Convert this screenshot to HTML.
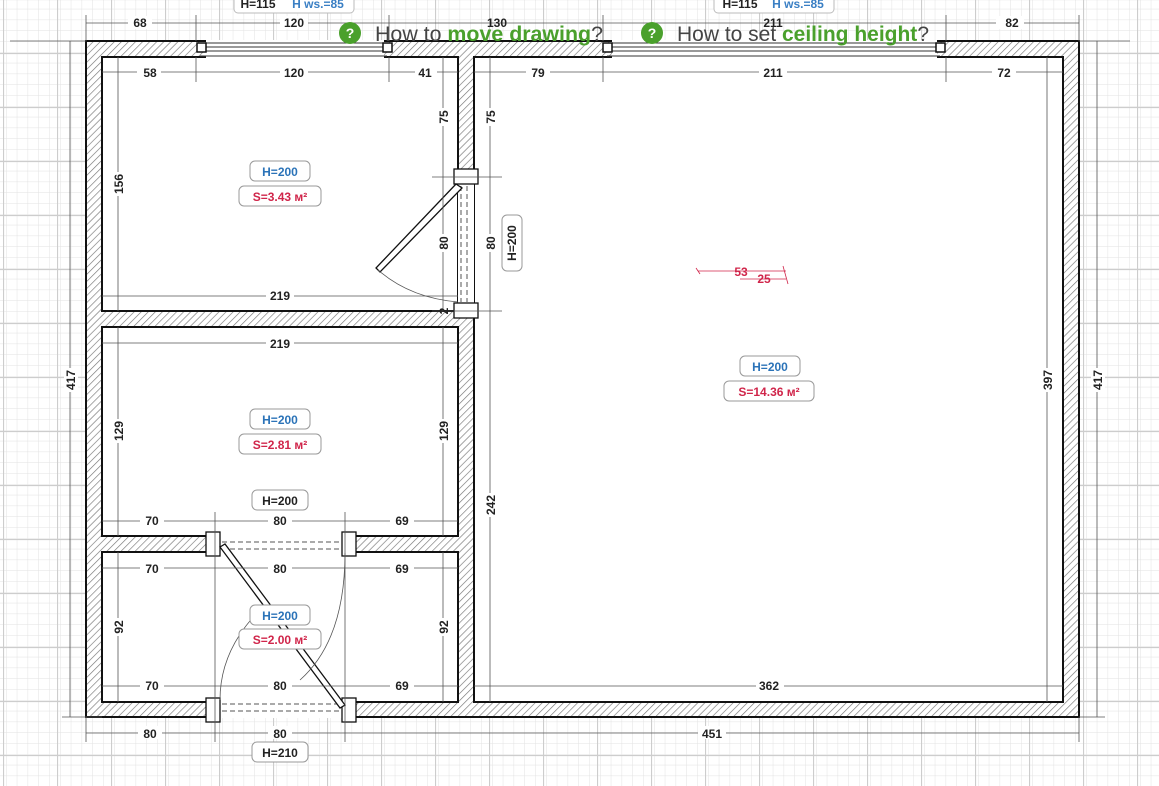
<!DOCTYPE html>
<html><head><meta charset="utf-8"><style>
html,body{margin:0;padding:0;background:#fff;overflow:hidden}
svg{display:block}
text{font-family:"Liberation Sans",Arial,sans-serif;font-weight:bold;font-size:12px;fill:#222}
.dim{stroke:#555;stroke-width:0.8}
.lb{fill:#fff}
</style></head><body>
<svg width="1159" height="786" viewBox="0 0 1159 786" xmlns="http://www.w3.org/2000/svg">
<defs>
<pattern id="minor" x="3" y="-1" width="10.8" height="10.8" patternUnits="userSpaceOnUse">
<path d="M0 0H10.8M0 0V10.8" stroke="#e2e2e2" stroke-width="1" fill="none"/>
</pattern>
<pattern id="major" x="3" y="-1" width="54" height="54" patternUnits="userSpaceOnUse">
<rect width="54" height="54" fill="url(#minor)"/>
<path d="M0 0.5H54M0.5 0V54" stroke="#cdcdcd" stroke-width="1.2" fill="none"/>
</pattern>
<pattern id="hatch" width="5" height="5" patternUnits="userSpaceOnUse" patternTransform="rotate(45)">
<rect width="5" height="5" fill="#fff"/>
<line x1="0" y1="0" x2="0" y2="5" stroke="#777" stroke-width="1.3"/>
</pattern>
</defs>
<rect width="1159" height="786" fill="#fff"/>
<rect width="1159" height="786" fill="url(#major)"/>

<rect x="86" y="41" width="993" height="676" fill="url(#hatch)" stroke="#111" stroke-width="2"/>
<g fill="#fff" stroke="#111" stroke-width="2">
<rect x="102" y="57" width="356" height="254"/>
<rect x="102" y="327" width="356" height="209"/>
<rect x="102" y="552" width="356" height="150"/>
<rect x="474" y="57" width="589" height="645"/>
</g>
<g fill="#fff" stroke="none">
<rect x="458" y="184" width="16" height="126"/>
<rect x="220" y="535" width="122" height="18"/>
<rect x="220" y="701" width="122" height="17"/>
<rect x="206" y="40" width="178" height="18"/>
<rect x="612" y="40" width="325" height="18"/>
</g>
<g stroke="#333" stroke-width="1" fill="none">
<line x1="200" y1="43" x2="387" y2="43"/><line x1="200" y1="47" x2="387" y2="47"/><line x1="200" y1="51" x2="387" y2="51"/><line x1="200" y1="56" x2="387" y2="56"/>
<line x1="607" y1="43" x2="940" y2="43"/><line x1="607" y1="47" x2="940" y2="47"/><line x1="607" y1="51" x2="940" y2="51"/><line x1="607" y1="56" x2="940" y2="56"/>
</g>
<g fill="#fff" stroke="#111" stroke-width="1.5">
<rect x="197" y="43" width="9" height="9"/><rect x="383" y="43" width="9" height="9"/>
<rect x="603" y="43" width="9" height="9"/><rect x="936" y="43" width="9" height="9"/>
</g>
<g fill="#fff" stroke="#111" stroke-width="1.3">
<rect x="454" y="169" width="24" height="15"/><rect x="454" y="303" width="24" height="15"/>
<rect x="206" y="532" width="14" height="24"/><rect x="342" y="532" width="14" height="24"/>
<rect x="206" y="698" width="14" height="24"/><rect x="342" y="698" width="14" height="24"/>
</g>
<g stroke="#555" stroke-width="1" stroke-dasharray="5,3" fill="none">
<line x1="461" y1="186" x2="461" y2="302"/><line x1="467" y1="186" x2="467" y2="302"/>
<line x1="222" y1="542" x2="340" y2="542"/><line x1="222" y1="549" x2="340" y2="549"/>
<line x1="222" y1="704" x2="340" y2="704"/><line x1="222" y1="711" x2="340" y2="711"/>
</g>
<g fill="#fff" stroke="#111" stroke-width="1.3">
<polygon points="456,184 462,188 380,272 376,268"/>
<polygon points="220,547 225,544 345,705 340,708"/>
</g>
<g stroke="#555" stroke-width="0.8" fill="none">
<path d="M378,270 Q410,298 458,302"/>
<path d="M345,553 Q345,640 300,680"/>
<path d="M220,700 Q220,650 260,610"/>
</g>
<g class="dim" fill="none">
<line x1="86" y1="23" x2="1079" y2="23"/>
<line x1="86" y1="15" x2="86" y2="41"/><line x1="196" y1="15" x2="196" y2="41"/><line x1="389" y1="15" x2="389" y2="41"/><line x1="603" y1="15" x2="603" y2="41"/><line x1="946" y1="15" x2="946" y2="41"/><line x1="1079" y1="15" x2="1079" y2="41"/>
<line x1="10" y1="41" x2="86" y2="41"/><line x1="1079" y1="41" x2="1130" y2="41"/>
<line x1="102" y1="72" x2="458" y2="72"/><line x1="474" y1="72" x2="1063" y2="72"/>
<line x1="196" y1="57" x2="196" y2="82"/><line x1="389" y1="57" x2="389" y2="82"/><line x1="603" y1="57" x2="603" y2="82"/><line x1="946" y1="57" x2="946" y2="82"/>
<line x1="70" y1="41" x2="70" y2="717"/><line x1="1097" y1="41" x2="1097" y2="717"/>
<line x1="62" y1="717" x2="102" y2="717"/><line x1="1079" y1="717" x2="1105" y2="717"/>
<line x1="118" y1="57" x2="118" y2="311"/>
<line x1="443" y1="57" x2="443" y2="311"/><line x1="490" y1="57" x2="490" y2="702"/>
<line x1="432" y1="177" x2="502" y2="177"/><line x1="432" y1="311" x2="502" y2="311"/>
<line x1="1047" y1="57" x2="1047" y2="702"/>
<line x1="102" y1="296" x2="458" y2="296"/><line x1="102" y1="343" x2="458" y2="343"/>
<line x1="118" y1="327" x2="118" y2="536"/><line x1="443" y1="327" x2="443" y2="536"/>
<line x1="102" y1="521" x2="458" y2="521"/><line x1="102" y1="568" x2="458" y2="568"/>
<line x1="118" y1="552" x2="118" y2="702"/><line x1="443" y1="552" x2="443" y2="702"/>
<line x1="102" y1="686" x2="458" y2="686"/><line x1="474" y1="686" x2="1063" y2="686"/>
<line x1="86" y1="733" x2="1079" y2="733"/>
<line x1="86" y1="717" x2="86" y2="742"/><line x1="215" y1="512" x2="215" y2="742"/><line x1="345" y1="512" x2="345" y2="742"/><line x1="1079" y1="717" x2="1079" y2="742"/>
</g>
<g text-anchor="middle">
<g class="lb"><rect x="128" y="16" width="24" height="13"/><rect x="280" y="16" width="28" height="13"/><rect x="996" y="16" width="28" height="13"/>
<rect x="137" y="66" width="24" height="13"/><rect x="280" y="66" width="28" height="13"/><rect x="415" y="66" width="22" height="13"/><rect x="526" y="66" width="24" height="13"/><rect x="759" y="66" width="28" height="13"/><rect x="992" y="66" width="24" height="13"/>
<rect x="266" y="289" width="28" height="13"/><rect x="266" y="336" width="28" height="13"/>
<rect x="140" y="514" width="24" height="13"/><rect x="268" y="514" width="24" height="13"/><rect x="390" y="514" width="24" height="13"/>
<rect x="140" y="561" width="24" height="13"/><rect x="268" y="561" width="24" height="13"/><rect x="390" y="561" width="24" height="13"/>
<rect x="140" y="679" width="24" height="13"/><rect x="268" y="679" width="24" height="13"/><rect x="390" y="679" width="24" height="13"/><rect x="756" y="679" width="28" height="13"/>
<rect x="138" y="726" width="24" height="13"/><rect x="268" y="726" width="24" height="13"/><rect x="698" y="726" width="28" height="13"/>
</g>
<text x="140" y="27">68</text><text x="294" y="27">120</text><text x="497" y="27">130</text><text x="773" y="27">211</text><text x="1012" y="27">82</text>
<text x="150" y="77">58</text><text x="294" y="77">120</text><text x="425" y="77">41</text><text x="538" y="77">79</text><text x="773" y="77">211</text><text x="1004" y="77">72</text>
<text x="280" y="300">219</text><text x="280" y="348">219</text>
<text x="152" y="525">70</text><text x="280" y="525">80</text><text x="402" y="525">69</text>
<text x="152" y="573">70</text><text x="280" y="573">80</text><text x="402" y="573">69</text>
<text x="152" y="690">70</text><text x="280" y="690">80</text><text x="402" y="690">69</text><text x="769" y="690">362</text>
<text x="150" y="738">80</text><text x="280" y="738">80</text><text x="712" y="738">451</text>
</g>
<g text-anchor="middle">
<g transform="translate(75,380) rotate(-90)"><rect x="-12" y="-11" width="24" height="14" class="lb"/><text>417</text></g>
<g transform="translate(1102,380) rotate(-90)"><rect x="-12" y="-11" width="24" height="14" class="lb"/><text>417</text></g>
<g transform="translate(123,184) rotate(-90)"><rect x="-12" y="-11" width="24" height="14" class="lb"/><text>156</text></g>
<g transform="translate(448,117) rotate(-90)"><rect x="-9" y="-11" width="18" height="14" class="lb"/><text>75</text></g>
<g transform="translate(495,117) rotate(-90)"><rect x="-9" y="-11" width="18" height="14" class="lb"/><text>75</text></g>
<g transform="translate(448,243) rotate(-90)"><rect x="-9" y="-11" width="18" height="14" class="lb"/><text>80</text></g>
<g transform="translate(495,243) rotate(-90)"><rect x="-9" y="-11" width="18" height="14" class="lb"/><text>80</text></g>
<g transform="translate(448,311) rotate(-90)"><text>2</text></g>
<g transform="translate(495,505) rotate(-90)"><rect x="-12" y="-11" width="24" height="14" class="lb"/><text>242</text></g>
<g transform="translate(1052,380) rotate(-90)"><rect x="-12" y="-11" width="24" height="14" class="lb"/><text>397</text></g>
<g transform="translate(123,431) rotate(-90)"><rect x="-12" y="-11" width="24" height="14" class="lb"/><text>129</text></g>
<g transform="translate(448,431) rotate(-90)"><rect x="-12" y="-11" width="24" height="14" class="lb"/><text>129</text></g>
<g transform="translate(123,627) rotate(-90)"><rect x="-9" y="-11" width="18" height="14" class="lb"/><text>92</text></g>
<g transform="translate(448,627) rotate(-90)"><rect x="-9" y="-11" width="18" height="14" class="lb"/><text>92</text></g>
</g>
<g text-anchor="middle" stroke-width="1">
<rect x="234" y="-6" width="120" height="19" rx="4" fill="#fff" stroke="#bbb"/>
<text x="258" y="8">H=115</text><text x="318" y="8" style="fill:#3a7fc4">H ws.=85</text>
<rect x="714" y="-6" width="120" height="19" rx="4" fill="#fff" stroke="#bbb"/>
<text x="740" y="8">H=115</text><text x="798" y="8" style="fill:#3a7fc4">H ws.=85</text>
<rect x="250" y="161" width="60" height="20" rx="5" fill="#fff" stroke="#999"/><text x="280" y="176" style="fill:#2b73b8">H=200</text>
<rect x="239" y="186" width="82" height="20" rx="5" fill="#fff" stroke="#999"/><text x="280" y="201" style="fill:#d0254a">S=3.43 м²</text>
<rect x="250" y="409" width="60" height="20" rx="5" fill="#fff" stroke="#999"/><text x="280" y="424" style="fill:#2b73b8">H=200</text>
<rect x="239" y="434" width="82" height="20" rx="5" fill="#fff" stroke="#999"/><text x="280" y="449" style="fill:#d0254a">S=2.81 м²</text>
<rect x="250" y="605" width="60" height="20" rx="5" fill="#fff" stroke="#999"/><text x="280" y="620" style="fill:#2b73b8">H=200</text>
<rect x="239" y="629" width="82" height="20" rx="5" fill="#fff" stroke="#999"/><text x="280" y="644" style="fill:#d0254a">S=2.00 м²</text>
<rect x="740" y="356" width="60" height="20" rx="5" fill="#fff" stroke="#999"/><text x="770" y="371" style="fill:#2b73b8">H=200</text>
<rect x="724" y="381" width="90" height="20" rx="5" fill="#fff" stroke="#999"/><text x="769" y="396" style="fill:#d0254a">S=14.36 м²</text>
<rect x="252" y="490" width="56" height="20" rx="5" fill="#fff" stroke="#999"/><text x="280" y="505">H=200</text>
<rect x="252" y="742" width="56" height="20" rx="5" fill="#fff" stroke="#999"/><text x="280" y="757">H=210</text>
<g transform="translate(512,243) rotate(-90)"><rect x="-28" y="-10" width="56" height="20" rx="5" fill="#fff" stroke="#999"/><text y="4">H=200</text></g>
</g>
<g stroke="#d0254a" stroke-width="0.8" fill="none">
<line x1="698" y1="271" x2="786" y2="271"/><line x1="740" y1="279" x2="786" y2="279"/>
<line x1="696" y1="268" x2="700" y2="274"/><line x1="783" y1="266" x2="788" y2="284"/>
</g>
<g text-anchor="middle"><text x="741" y="276" style="fill:#d0254a">53</text><text x="764" y="283" style="fill:#d0254a">25</text></g>
<g>
<circle cx="350" cy="33" r="11" fill="#4aa02c"/><text x="350" y="38" text-anchor="middle" style="fill:#fff;font-size:14px">?</text>
<text x="375" y="41" textLength="228" lengthAdjust="spacingAndGlyphs" style="font-weight:normal;font-size:21px;fill:#444">How to <tspan style="font-weight:bold;fill:#4aa02c">move drawing</tspan>?</text>
<circle cx="652" cy="33" r="11" fill="#4aa02c"/><text x="652" y="38" text-anchor="middle" style="fill:#fff;font-size:14px">?</text>
<text x="677" y="41" textLength="252" lengthAdjust="spacingAndGlyphs" style="font-weight:normal;font-size:21px;fill:#444">How to set <tspan style="font-weight:bold;fill:#4aa02c">ceiling height</tspan>?</text>
</g>
</svg>
</body></html>
